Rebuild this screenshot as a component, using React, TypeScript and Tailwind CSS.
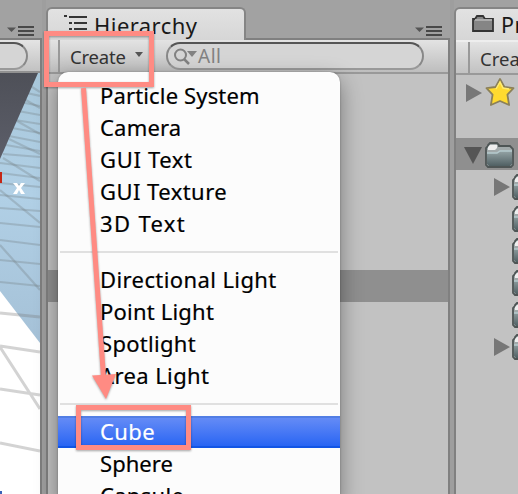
import type { ReactNode } from 'react';

const FONT = "font-['Noto_Sans','Open_Sans',sans-serif]";

function PaneMenu() {
  return (
    <svg width="28" height="12" viewBox="0 0 28 12" className="block">
      <path d="M0 2.500h9L4.500 7z" fill="#555" />
      <path d="M11 2h16M11 6h16M11 10h16" stroke="#484848" strokeWidth="2" />
    </svg>
  );
}

function Tab({ children, className }: { children: ReactNode; className: string }) {
  return (
    <div className={`flex h-[33px] shrink-0 items-center rounded-t-[6px] border-2 border-b-0 border-[#858585] bg-linear-to-b from-[#e2e2e2] to-[#d6d6d6] text-[#191919] ${className}`}>
      {children}
    </div>
  );
}

function Folder() {
  return (
    <svg width="31" height="27" viewBox="0 0 31 27" className="block shrink-0">
      <defs>
        <linearGradient id="folder" x2="0" y2="1">
          <stop stopColor="#94a3a5" />
          <stop offset="1" stopColor="#506063" />
        </linearGradient>
      </defs>
      <path d="M2 8V6l2-2V3l2-2h7l2 2v1h11l3 3v16l-2 2H4l-2-2z" fill="#a1a9aa" stroke="#4e5555" strokeWidth="1.800" />
      <path d="M4 8V5l2-2h7v3l-2 2z" fill="#eee" />
      <path d="M3 11h10l3-2h12v13l-2 2H5l-2-2z" fill="url(#folder)" />
      <path d="M3 11h10l3-2h12" fill="none" stroke="#b5cace" strokeWidth="1.500" />
    </svg>
  );
}

function Triangle() {
  return (
    <svg width="16" height="18" viewBox="0 0 16 18" className="block shrink-0">
      <path d="M0 0l16 9-16 9z" fill="#777" />
    </svg>
  );
}

function Scene() {
  return (
    <svg width="40" height="421" viewBox="0 73 40 421" className="block">
      <defs>
        <linearGradient id="sky" x2="0" y2="1">
          <stop stopColor="#a8c7da" />
          <stop offset=".45" stopColor="#b1d0e6" />
          <stop offset="1" stopColor="#a5c1d7" />
        </linearGradient>
        <linearGradient id="shade" x2="0" y2="1">
          <stop stopColor="#4e5058" />
          <stop offset="1" stopColor="#5c5e69" />
        </linearGradient>
      </defs>
      <path d="M0 73h40v421H0z" fill="#fff" />
      <path d="M0 73h40v270L0 291z" fill="url(#sky)" />
      <g fill="none" stroke="#727b7d" strokeOpacity=".3" strokeWidth="2.200">
        <path d="M22 92l18 4M20 102l20 4M18 111l22 4M15 120l25 4M12 128l28 5M9 136l31 6M6 145l34 6M3 154l37 3M0 163l40 5M0 173l40 5M0 183l40 4M0 195l40 4M0 208l40 3M0 223l40 4M0 240l40 5M0 260l40 4M0 282l40 4" />
        <path d="M29 85l11 7M24 99l16 9M17 121l23 13M9 139l31 15M3 158l37 23M0 190l40 33M0 245l40 45" />
      </g>
      <g fill="none" stroke="#777" strokeOpacity=".32" strokeWidth="3">
        <path d="M0 313l40 4M0 346l40 6M0 389l40 6M0 443l40 8M0 347l40 62" />
      </g>
      <path d="M0 73h38L0 159z" fill="url(#shade)" />
      <path d="M0 172h2v11H0z" fill="#c52615" />
      <path d="M13 183h4l2 3 2-3h4l-4 5 4 6h-4l-2-4-2 4h-4l4-6z" fill="#fff" />
      <path d="M0 491h2v3H0z" fill="#3a61b8" />
    </svg>
  );
}

const groups = [
  [
    ['Particle System', 'tracking-[0.15px]'],
    ['Camera', 'tracking-[0.2px]'],
    ['GUI Text', 'tracking-[0.65px]'],
    ['GUI Texture', 'tracking-[0.45px]'],
    ['3D Text', 'tracking-[1.350px]'],
  ],
  [
    ['Directional Light', 'tracking-[0.4px]'],
    ['Point Light', 'tracking-[0.200px]'],
    ['Spotlight', 'tracking-[0.300px]'],
    ['Area Light', 'tracking-[0.4px]'],
  ],
  [
    ['Cube', 'tracking-[0.4px]'],
    ['Sphere', 'tracking-[0.05px]'],
    ['Capsule', 'tracking-[0.3px]'],
  ],
];

function CreateMenu() {
  return (
    <div className="absolute top-[72px] left-[58px] h-[430px] w-[282px] rounded-t-[10px] bg-[#fcfcfc] pt-2 text-[22px] text-black shadow-[0_8px_22px_rgba(0,0,0,0.4),0_0_2px_rgba(0,0,0,0.3)]">
      {groups.map((items, index) => (
        <div key={index}>
          {index > 0 && (
            <div className="flex h-6 items-center px-0.5">
              <div className="h-0.5 w-full bg-[#e0e0e0]" />
            </div>
          )}
          {items.map(([label, tracking]) => (
            <div
              key={label}
              className={`h-8 pl-[42px] whitespace-nowrap [-webkit-text-stroke:0.2px_currentColor] ${tracking} ${
                label === 'Cube'
                  ? 'border-t-2 border-b-2 border-t-[#527ee4] border-b-[#1255e5] bg-linear-to-b from-[#648bf6] to-[#2864f3] leading-[26px] text-white'
                  : 'leading-[30px]'
              }`}
            >
              {label}
            </div>
          ))}
        </div>
      ))}
    </div>
  );
}

function Annotations() {
  return (
    <svg width="518" height="494" className="absolute top-0 left-0 drop-shadow-[0_1px_1px_rgba(0,0,0,0.35)]">
      <g fill="none" stroke="#ff8b83" strokeWidth="5">
        <path d="M46.500 33.500h105v51h-105z" />
        <path d="M78.500 407.500h110v40h-110z" />
        <path d="M83.500 88L103.500 377" />
      </g>
      <path d="M92 375.500l24-1.500-10 25z" fill="#ff8b83" />
    </svg>
  );
}

export default function App() {
  return (
    <div className={`relative flex h-[494px] w-[518px] overflow-hidden bg-[#9e9e9e] ${FONT}`}>
      <div className="flex w-[42px] shrink-0 flex-col">
        <div className="flex h-[38px] justify-end bg-[#a2a2a2] pt-[25px] pr-[7px]">
          <PaneMenu />
        </div>
        <div className="h-[456px] border-t-2 border-r-2 border-[#7e7e7e]">
          <div className="h-[33px] overflow-hidden border-b-2 border-[#919191] bg-linear-to-b from-[#e4e4e4] to-[#c2c2c2] pt-[2px]">
            <div className="-ml-10 h-7 w-[68px] rounded-full border-2 border-t-[#555] border-r-[#888] border-b-[#999] bg-[#d5d5d5]" />
          </div>
          <Scene />
        </div>
      </div>

      <div className="ml-1 flex w-[404px] shrink-0 flex-col">
        <div className="flex h-10 items-end justify-between border-b-2 border-[#808080] bg-[#a2a2a2]">
          <Tab className="-mb-0.5 w-[200px] pl-4">
            <svg width="23" height="18" viewBox="0 0 23 18" className="-mt-[3px] block shrink-0">
              <path d="M0 2h3M5 3h18M5 9h3M10 9h13M5 15h3M10 15h13" stroke="#353535" strokeWidth="2" />
            </svg>
            <span className="mt-[2px] ml-[7px] text-[22px] tracking-[0.450px]">Hierarchy</span>
          </Tab>
          <div className="mb-px mr-[7px]"><PaneMenu /></div>
        </div>
        <div className="flex h-[454px] flex-col border-x-2 border-[#808080] bg-[#c2c2c2]">
          <div className="flex h-[34px] shrink-0 border-b-2 border-[#999] bg-linear-to-b from-[#e3e3e3] to-[#bebebe]">
            <div className="ml-2.5 flex w-[98px] border-l-2 border-[#999] pl-[10px] text-[18.500px] leading-[33px] text-[#333]">
              <span className="tracking-[-0.2px]">Create</span>
              <svg width="10" height="6" viewBox="0 0 10 6" className="mt-3 ml-[8px] block"><path d="M1 0h8L5 5z" fill="#555" /></svg>
            </div>
            <div className="mt-0.5 ml-[10px] flex h-7 w-[258px] items-center rounded-full border-2 border-t-[#555] border-r-[#888] border-b-[#999] border-l-[#888] bg-[#d5d5d5] pl-[6px] text-[#828282]">
              <svg width="23" height="18" viewBox="0 0 23 18" className="mt-0.5 block">
                <circle cx="6.500" cy="7" r="5.500" fill="none" stroke="currentColor" strokeWidth="2" />
                <path d="M10 11l5 5" stroke="currentColor" strokeWidth="2.500" />
                <path d="M13 3h10l-5 6z" fill="currentColor" />
              </svg>
              <span className="ml-px text-[19px] tracking-[0.5px]">All</span>
            </div>
          </div>
          <div className="mt-[196px] h-8 shrink-0 bg-[#8f8f8f]" />
        </div>
      </div>

      <div className="ml-1 flex w-[64px] shrink-0 flex-col overflow-hidden">
        <div className="flex h-10 shrink-0 items-end bg-[#a2a2a2]">
          <Tab className="w-[100px] pl-4">
            <svg width="22" height="19" viewBox="0 0 22 19" className="-mt-[2px] block shrink-0">
              <path d="M1 17V5h2l2-3h6l2 3h8v12z" fill="#858585" stroke="#333" strokeWidth="1.800" />
              <path d="M3 6h17" stroke="#ababab" strokeWidth="2" />
            </svg>
            <span className="mt-[2px] ml-[7px] text-[21.500px] tracking-[0.4px]">Project</span>
          </Tab>
        </div>
        <div className="h-[454px] w-[120px] border-l-2 border-[#808080] bg-[#c2c2c2]">
          <div className="h-[35px] border-t-2 border-b-2 border-t-[#eee] border-b-[#999] bg-linear-to-b from-[#e3e3e3] to-[#c2c2c2]">
            <div className="ml-3 h-full border-l-2 border-[#999] pl-[10px] text-[18.500px] leading-[34px] text-[#333]">Create</div>
          </div>
          <div className="flex h-[63px] items-start pt-[3px] pl-2.5">
            <div className="mt-1.5"><Triangle /></div>
            <svg width="30" height="30" viewBox="0 0 30 30" className="ml-[3px] block">
              <path d="M15 1l4.400 8 9.100 1.200-6.100 6.500 1.700 10.300-9.100-4-9.100 4 1.700-10.300L1.500 10.200 10.600 9z" fill="#ffda2f" stroke="#8b8059" strokeWidth="1.800" strokeLinejoin="round" />
              <path d="M11 11l4-7 3 6 6 1" fill="none" stroke="#ffec72" strokeWidth="1.500" />
            </svg>
          </div>
          <div className="flex h-8 items-center bg-[#8f8f8f] pt-0.5 pl-2">
            <svg width="18" height="17" viewBox="0 0 18 17" className="mr-[2px] block"><path d="M0 0h18L9 17z" fill="#555" /></svg>
            <Folder />
          </div>
          {[true, false, false, false, false, true].map((parent, index) => (
            <div key={index} className="flex h-8 items-center pt-0.5 pl-[38px]">
              <div className="w-[17px]">{parent && <Triangle />}</div>
              <Folder />
            </div>
          ))}
        </div>
      </div>

      <CreateMenu />
      <Annotations />
    </div>
  );
}
